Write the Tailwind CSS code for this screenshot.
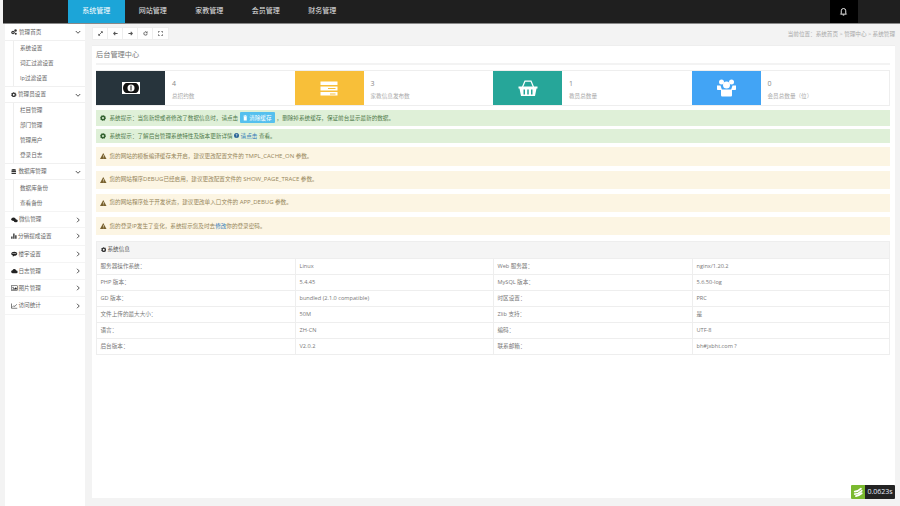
<!DOCTYPE html>
<html lang="zh-CN">
<head>
    <meta charset="UTF-8">
    <title>后台管理中心</title>
    <script src="https://cdn.jsdelivr.net/npm/@tailwindcss/browser@4"></script>
</head>
<body class="bg-[#f3f3f3] overflow-hidden font-['Open_Sans','Noto_Sans_CJK_SC',sans-serif] text-[5.6px] text-[#777]">
<div class="w-[900px] h-[506px] flex flex-col relative">
    <!-- Top bar -->
    <div class="h-[24px] ml-[3px] bg-[#1f1f1f] border-b border-[#888] flex text-[7px] text-[#e4e4e4] shrink-0">
        <div class="w-[65px]"></div>
        <div class="w-[56.5px] h-[23px] bg-[#1ca5d8] text-white flex items-center justify-center">系统管理</div>
        <div class="w-[56.5px] h-[23px] flex items-center justify-center">网站管理</div>
        <div class="w-[56.5px] h-[23px] flex items-center justify-center">家教管理</div>
        <div class="w-[56.5px] h-[23px] flex items-center justify-center">会员管理</div>
        <div class="w-[56.5px] h-[23px] flex items-center justify-center">财务管理</div>
        <div class="w-[28px] h-[23px] ml-[479px] bg-black flex items-center justify-center">
            <svg class="w-[9px] h-[9px]" viewBox="0 0 24 24" fill="none" stroke="#fff" stroke-width="2.4"><path d="M6 17V10a6 6 0 0 1 12 0v7l2 2H4z"/><path d="M10 21.5h4"/></svg>
        </div>
    </div>

    <div class="flex flex-1 min-h-0">
        <!-- Sidebar -->
        <div class="w-[80px] ml-[5px] bg-white shrink-0 text-[#666]">
            <div class="h-[17px] pl-[6px] pr-[4px] flex items-center border-b border-[#f0f0f0]">
                <svg class="w-[6px] h-[6px] mr-[2px]" viewBox="0 0 24 24" fill="#333"><circle cx="8" cy="14" r="7"/><circle cx="18" cy="6" r="5"/><circle cx="19" cy="19" r="4"/><circle cx="8" cy="14" r="2.5" fill="#fff"/></svg>
                <span>管理首页</span>
                <svg class="w-[6px] h-[6px] ml-auto" viewBox="0 0 24 24" fill="none" stroke="#555" stroke-width="4"><path d="M3 8l9 9 9-9"/></svg>
            </div>
            <div class="border-l border-[#eee] ml-[8px]">
                <div class="h-[15px] pl-[6px] flex items-center">系统设置</div>
                <div class="h-[15px] pl-[6px] flex items-center">词汇过滤设置</div>
                <div class="h-[15px] pl-[6px] flex items-center">Ip过滤设置</div>
            </div>
            <div class="h-[17px] pl-[6px] pr-[4px] flex items-center border-y border-[#f0f0f0]">
                <svg class="w-[5.5px] h-[5.5px] mr-[1.5px]" viewBox="0 0 24 24" fill="none" stroke="#333"><circle cx="12" cy="12" r="7" stroke-width="6"/><circle cx="12" cy="12" r="10.5" stroke-width="3" stroke-dasharray="4 4.25"/></svg>
                <span>管理员设置</span>
                <svg class="w-[6px] h-[6px] ml-auto" viewBox="0 0 24 24" fill="none" stroke="#555" stroke-width="4"><path d="M3 8l9 9 9-9"/></svg>
            </div>
            <div class="border-l border-[#eee] ml-[8px]">
                <div class="h-[15px] pl-[6px] flex items-center">栏目管理</div>
                <div class="h-[15px] pl-[6px] flex items-center">部门管理</div>
                <div class="h-[15px] pl-[6px] flex items-center">管理用户</div>
                <div class="h-[15px] pl-[6px] flex items-center">登录日志</div>
            </div>
            <div class="h-[17px] pl-[6px] pr-[4px] flex items-center border-y border-[#f0f0f0]">
                <svg class="w-[5.5px] h-[5.5px] mr-[2px]" viewBox="0 0 24 24" fill="#333"><ellipse cx="12" cy="4" rx="10" ry="4"/><path d="M2 7c2 3 18 3 20 0v5c-2 3-18 3-20 0zM2 15c2 3 18 3 20 0v5c-2 5-18 5-20 0z"/></svg>
                <span>数据库管理</span>
                <svg class="w-[6px] h-[6px] ml-auto" viewBox="0 0 24 24" fill="none" stroke="#555" stroke-width="4"><path d="M3 8l9 9 9-9"/></svg>
            </div>
            <div class="border-l border-[#eee] ml-[8px] py-[0.5px]">
                <div class="h-[15px] pl-[6px] flex items-center">数据库备份</div>
                <div class="h-[15px] pl-[6px] flex items-center">查看备份</div>
            </div>
            <div class="h-[17.3px] pl-[6px] pr-[4px] flex items-center border-y border-[#f4f4f4]">
                <svg class="w-[7px] h-[6px] mr-[1px]" viewBox="0 0 28 24" fill="#222"><ellipse cx="10" cy="9" rx="9" ry="7"/><ellipse cx="19" cy="15" rx="8" ry="6"/></svg>
                <span>微信管理</span>
                <svg class="w-[6px] h-[6px] ml-auto" viewBox="0 0 24 24" fill="none" stroke="#555" stroke-width="4"><path d="M8 3l9 9-9 9"/></svg>
            </div>
            <div class="h-[17.3px] pl-[6px] pr-[4px] flex items-center border-b border-[#f4f4f4]">
                <svg class="w-[6px] h-[6px] mr-[1px]" viewBox="0 0 24 24" fill="#222"><path d="M1 14h5v9H1zM9 2h5v21H9zM17 9h5v14h-5z"/></svg>
                <span>分销提成设置</span>
                <svg class="w-[6px] h-[6px] ml-auto" viewBox="0 0 24 24" fill="none" stroke="#555" stroke-width="4"><path d="M8 3l9 9-9 9"/></svg>
            </div>
            <div class="h-[17.3px] pl-[6px] pr-[4px] flex items-center border-b border-[#f4f4f4]">
                <svg class="w-[6.5px] h-[6px] mr-[1px]" viewBox="0 0 26 24" fill="#222"><path d="M13 3c7 0 12 3 12 8s-5 8-12 8l-6 4 1-5C3 17 1 14 1 11c0-5 5-8 12-8z"/><path d="M5 10h16v2H5z" fill="#fff"/></svg>
                <span>楼宇设置</span>
                <svg class="w-[6px] h-[6px] ml-auto" viewBox="0 0 24 24" fill="none" stroke="#555" stroke-width="4"><path d="M8 3l9 9-9 9"/></svg>
            </div>
            <div class="h-[17.3px] pl-[6px] pr-[4px] flex items-center border-b border-[#f4f4f4]">
                <svg class="w-[6.5px] h-[6px] mr-[1px]" viewBox="0 0 26 24" fill="#222"><path d="M7 21a6 6 0 0 1-1-12 8 8 0 0 1 15 1 5.500 5.500 0 0 1 0 11z"/></svg>
                <span>日志管理</span>
                <svg class="w-[6px] h-[6px] ml-auto" viewBox="0 0 24 24" fill="none" stroke="#555" stroke-width="4"><path d="M8 3l9 9-9 9"/></svg>
            </div>
            <div class="h-[17.3px] pl-[6px] pr-[4px] flex items-center border-b border-[#f4f4f4]">
                <svg class="w-[6.5px] h-[6px] mr-[1px]" viewBox="0 0 26 24" fill="#222"><path d="M0 2h26v20H0zm2 2v16h22V4z"/><circle cx="8" cy="9" r="2.5"/><path d="M4 18l6-5 3 2 6-6 4 4v5z"/></svg>
                <span>图片管理</span>
                <svg class="w-[6px] h-[6px] ml-auto" viewBox="0 0 24 24" fill="none" stroke="#555" stroke-width="4"><path d="M8 3l9 9-9 9"/></svg>
            </div>
            <div class="h-[17.3px] pl-[6px] pr-[4px] flex items-center border-b border-[#f4f4f4]">
                <svg class="w-[6.5px] h-[6px] mr-[1px]" viewBox="0 0 26 24" fill="none" stroke="#333" stroke-width="2.5"><path d="M2 2v19h23"/><path d="M5 17l6-6 4 3 8-9"/></svg>
                <span>访问统计</span>
                <svg class="w-[6px] h-[6px] ml-auto" viewBox="0 0 24 24" fill="none" stroke="#555" stroke-width="4"><path d="M8 3l9 9-9 9"/></svg>
            </div>
        </div>

        <!-- Main -->
        <div class="w-[810px] pl-[7px] flex flex-col">
            <div class="h-[20.5px] pt-[3px] flex items-start justify-between">
                <div class="flex bg-white border border-[#eee] h-[13px]">
                    <div class="w-[15px] flex items-center justify-center border-r border-[#eee]"><svg class="w-[5px] h-[5px]" viewBox="0 0 24 24" fill="none" stroke="#555" stroke-width="4"><path d="M4 20L20 4M14 3h7v7M3 14v7h7"/></svg></div>
                    <div class="w-[15px] flex items-center justify-center border-r border-[#eee]"><svg class="w-[5px] h-[5px]" viewBox="0 0 24 24" fill="none" stroke="#555" stroke-width="5"><path d="M22 12H4M11 4l-8 8 8 8"/></svg></div>
                    <div class="w-[15px] flex items-center justify-center border-r border-[#eee]"><svg class="w-[5px] h-[5px]" viewBox="0 0 24 24" fill="none" stroke="#555" stroke-width="5"><path d="M2 12h18M13 4l8 8-8 8"/></svg></div>
                    <div class="w-[15px] flex items-center justify-center border-r border-[#eee]"><svg class="w-[5px] h-[5px]" viewBox="0 0 24 24" fill="none" stroke="#555" stroke-width="4"><path d="M20 12a8 8 0 1 1-3-6.200M20 2v6h-6"/></svg></div>
                    <div class="w-[15px] flex items-center justify-center"><svg class="w-[5px] h-[5px]" viewBox="0 0 24 24" fill="none" stroke="#555" stroke-width="4"><path d="M2 8V2h6M16 2h6v6M22 16v6h-6M8 22H2v-6"/></svg></div>
                </div>
                <div class="text-[#aaa] pt-[3px]">当前位置：系统首页 &gt; 管理中心 &gt; 系统管理</div>
            </div>

            <div class="w-[803px] h-[453.5px] bg-white pl-[4px] pr-[5px] border-t border-[#eee]">
                <div class="h-[19.5px] flex items-center text-[7.2px] text-[#777] border-b-2 border-[#f3f3f3]">后台管理中心</div>
                <!-- Stats -->
                <div class="mt-[5px] h-[36px] border-y border-r border-[#eee] flex">
                    <div class="w-[198.5px] flex">
                        <div class="w-[69px] bg-[#27343c] flex items-center justify-center">
                            <svg class="w-[18px] h-[12px]" viewBox="0 0 36 24"><path d="M0 0h36v24H0z" fill="#fff"/><path d="M2 12c0-6 4-10 7-10h18c3 0 7 4 7 10s-4 10-7 10H9c-3 0-7-4-7-10z" fill="#111"/><circle cx="18" cy="12" r="7" fill="#fff"/><path d="M17 7h2v10h-2z" fill="#111"/></svg>
                        </div>
                        <div class="pl-[7px] pt-[8px]"><div class="text-[7px] leading-[9px] text-[#888]">4</div><div class="mt-[4px] text-[#aaa]">总招约数</div></div>
                    </div>
                    <div class="w-[198.5px] flex">
                        <div class="w-[69px] bg-[#f8bf39] flex items-center justify-center">
                            <svg class="w-[18px] h-[15px]" viewBox="0 0 36 30" fill="#fff"><path d="M1 1h34v7H1zM1 11h34v8H1zM1 22h34v7H1z"/><path d="M16 14h15v2H16zM20 25h11v2H20z" fill="#f8bf39"/></svg>
                        </div>
                        <div class="pl-[7px] pt-[8px]"><div class="text-[7px] leading-[9px] text-[#888]">3</div><div class="mt-[4px] text-[#aaa]">家教信息发布数</div></div>
                    </div>
                    <div class="w-[198.5px] flex">
                        <div class="w-[69px] bg-[#26a699] flex items-center justify-center">
                            <svg class="w-[20px] h-[18px]" viewBox="0 0 40 36"><path d="M9 16l5-12h12l5 12" fill="none" stroke="#fff" stroke-width="2.5"/><path d="M1 15h38v4h-2l-3 15H6L3 19H1z" fill="#fff"/><path d="M11 21h3v10h-3zM18.500 21h3v10h-3zM26 21h3v10h-3z" fill="#26a699"/></svg>
                        </div>
                        <div class="pl-[7px] pt-[8px]"><div class="text-[7px] leading-[9px] text-[#888]">1</div><div class="mt-[4px] text-[#aaa]">教员总数量</div></div>
                    </div>
                    <div class="flex-1 flex">
                        <div class="w-[69px] bg-[#42a4f5] flex items-center justify-center">
                            <svg class="w-[19px] h-[18px]" viewBox="0 0 38 36" fill="#fff"><circle cx="9" cy="6" r="5"/><circle cx="29" cy="6" r="5"/><circle cx="19" cy="12" r="7"/><path d="M0 13h7l3 9H3c-3 0-3-1-3-3zM38 13h-7l-3 9h7c3 0 3-1 3-3z"/><path d="M8 21h22v11c0 2-1 3-3 3H11c-2 0-3-1-3-3z"/></svg>
                        </div>
                        <div class="pl-[7px] pt-[8px]"><div class="text-[7px] leading-[9px] text-[#888]">0</div><div class="mt-[4px] text-[#aaa]">会员总数量（位）</div></div>
                    </div>
                </div>

                <!-- Alerts -->
                <div class="mt-[4px] h-[15.5px] bg-[#dff0d8] text-[#4f7a4b] flex items-center pl-[4px]">
                    <svg class="w-[6px] h-[6px] mr-[3.5px]" viewBox="0 0 24 24" fill="none" stroke="#33612f"><circle cx="12" cy="12" r="7" stroke-width="6"/><circle cx="12" cy="12" r="10.5" stroke-width="3" stroke-dasharray="4 4.25"/></svg>
                    <span>系统提示：当您新增或者修改了数据信息时，请点击</span>
                    <span class="mx-[1.5px] h-[11px] px-[3.5px] bg-[#55c0ee] text-white rounded-[1px] flex items-center">
                        <svg class="w-[4.5px] h-[5.5px] mr-[1.5px]" viewBox="0 0 18 22" fill="#fff"><path d="M1 3h16v2H1zM6 0h6v2H6zM3 6h12v16H3z"/></svg>
                        清除缓存
                    </span>
                    <span>，删除掉系统缓存，保证前台显示最新的数据。</span>
                </div>
                <div class="mt-[3.5px] h-[13.5px] bg-[#dff0d8] text-[#4f7a4b] flex items-center pl-[4px]">
                    <svg class="w-[6px] h-[6px] mr-[3.5px]" viewBox="0 0 24 24" fill="none" stroke="#33612f"><circle cx="12" cy="12" r="7" stroke-width="6"/><circle cx="12" cy="12" r="10.5" stroke-width="3" stroke-dasharray="4 4.25"/></svg>
                    <span>系统提示：了解后台管理系统特性及版本更新详情</span>
                    <svg class="w-[5px] h-[5px] mx-[1.5px]" viewBox="0 0 24 24"><circle cx="12" cy="12" r="12" fill="#2a6496"/><path d="M9 9a3 3 0 1 1 4 3l-1 1v2M12 18v2" stroke="#fff" stroke-width="3" fill="none"/></svg>
                    <span class="text-[#337ab7]">请点击</span>
                    <span class="ml-[1.5px]">查看。</span>
                </div>
                <div class="mt-[4.5px] h-[18.5px] bg-[#fcf5e3] text-[#96855a] flex items-center pl-[4px]">
                    <svg class="w-[6.5px] h-[6px] mr-[3px]" viewBox="0 0 26 24"><path d="M13 0l13 24H0z" fill="#7a6330"/><path d="M12 8h2v8h-2zM12 18h2v3h-2z" fill="#fcf5e3"/></svg>
                    <span>您的网站的模板编译缓存未开启，建议更改配置文件的 <span class="text-[6px]">TMPL_CACHE_ON</span> 参数。</span>
                </div>
                <div class="mt-[5px] h-[18px] bg-[#fcf5e3] text-[#96855a] flex items-center pl-[4px]">
                    <svg class="w-[6.5px] h-[6px] mr-[3px]" viewBox="0 0 26 24"><path d="M13 0l13 24H0z" fill="#7a6330"/><path d="M12 8h2v8h-2zM12 18h2v3h-2z" fill="#fcf5e3"/></svg>
                    <span>您的网站程序<span class="text-[6px]">DEBUG</span>已经启用，建议更改配置文件的 <span class="text-[6px]">SHOW_PAGE_TRACE</span> 参数。</span>
                </div>
                <div class="mt-[5px] h-[18px] bg-[#fcf5e3] text-[#96855a] flex items-center pl-[4px]">
                    <svg class="w-[6.5px] h-[6px] mr-[3px]" viewBox="0 0 26 24"><path d="M13 0l13 24H0z" fill="#7a6330"/><path d="M12 8h2v8h-2zM12 18h2v3h-2z" fill="#fcf5e3"/></svg>
                    <span>您的网站程序处于开发状态，建议更改单入口文件的 <span class="text-[6px]">APP_DEBUG</span> 参数。</span>
                </div>
                <div class="mt-[5.5px] h-[18px] bg-[#fcf5e3] text-[#96855a] flex items-center pl-[4px]">
                    <svg class="w-[6.5px] h-[6px] mr-[3px]" viewBox="0 0 26 24"><path d="M13 0l13 24H0z" fill="#7a6330"/><path d="M12 8h2v8h-2zM12 18h2v3h-2z" fill="#fcf5e3"/></svg>
                    <span>您的登录IP发生了变化，系统提示您及时去<span class="text-[#337ab7]">修改</span>你的登录密码。</span>
                </div>

                <!-- System info table -->
                <div class="mt-[5.5px] border border-[#eee] text-[#777]">
                    <div class="h-[16px] bg-[#f5f5f5] flex items-center pl-[3.5px] text-[#555]">
                        <svg class="w-[5.5px] h-[5.5px] mr-[1.5px]" viewBox="0 0 24 24" fill="none" stroke="#333"><circle cx="12" cy="12" r="7" stroke-width="6"/><circle cx="12" cy="12" r="10.5" stroke-width="3" stroke-dasharray="4 4.25"/></svg>
                        <span>系统信息</span>
                    </div>
                    <div class="grid grid-cols-[198px_198px_199px_1fr]">
                        <div class="h-[16px] flex items-center pl-[3.5px] border-t border-[#eee]">服务器操作系统：</div>
                        <div class="h-[16px] flex items-center pl-[3.5px] border-t border-l border-[#eee]">Linux</div>
                        <div class="h-[16px] flex items-center pl-[3.5px] border-t border-l border-[#eee]">Web 服务器：</div>
                        <div class="h-[16px] flex items-center pl-[3.5px] border-t border-l border-[#eee]">nginx/1.20.2</div>
                        <div class="h-[16px] flex items-center pl-[3.5px] border-t border-[#eee]">PHP 版本：</div>
                        <div class="h-[16px] flex items-center pl-[3.5px] border-t border-l border-[#eee]">5.4.45</div>
                        <div class="h-[16px] flex items-center pl-[3.5px] border-t border-l border-[#eee]">MySQL 版本：</div>
                        <div class="h-[16px] flex items-center pl-[3.5px] border-t border-l border-[#eee]">5.6.50-log</div>
                        <div class="h-[16px] flex items-center pl-[3.5px] border-t border-[#eee]">GD 版本：</div>
                        <div class="h-[16px] flex items-center pl-[3.5px] border-t border-l border-[#eee]">bundled (2.1.0 compatible)</div>
                        <div class="h-[16px] flex items-center pl-[3.5px] border-t border-l border-[#eee]">时区设置：</div>
                        <div class="h-[16px] flex items-center pl-[3.5px] border-t border-l border-[#eee]">PRC</div>
                        <div class="h-[16px] flex items-center pl-[3.5px] border-t border-[#eee]">文件上传的最大大小：</div>
                        <div class="h-[16px] flex items-center pl-[3.5px] border-t border-l border-[#eee]">50M</div>
                        <div class="h-[16px] flex items-center pl-[3.5px] border-t border-l border-[#eee]">Zlib 支持：</div>
                        <div class="h-[16px] flex items-center pl-[3.5px] border-t border-l border-[#eee]">是</div>
                        <div class="h-[16px] flex items-center pl-[3.5px] border-t border-[#eee]">语言：</div>
                        <div class="h-[16px] flex items-center pl-[3.5px] border-t border-l border-[#eee]">ZH-CN</div>
                        <div class="h-[16px] flex items-center pl-[3.5px] border-t border-l border-[#eee]">编码：</div>
                        <div class="h-[16px] flex items-center pl-[3.5px] border-t border-l border-[#eee]">UTF-8</div>
                        <div class="h-[16px] flex items-center pl-[3.5px] border-t border-[#eee]">后台版本：</div>
                        <div class="h-[16px] flex items-center pl-[3.5px] border-t border-l border-[#eee]">V2.0.2</div>
                        <div class="h-[16px] flex items-center pl-[3.5px] border-t border-l border-[#eee]">联系邮箱：</div>
                        <div class="h-[16px] flex items-center pl-[3.5px] border-t border-l border-[#eee]">bh#jxbht.com ?</div>
                    </div>
                </div>
            </div>
        </div>
    </div>

    <!-- Page trace badge -->
    <div class="absolute right-[5px] bottom-[7px] flex h-[14px]">
        <div class="w-[14px] bg-[#7ab92f] rounded-l-[1px] flex items-center justify-center">
            <svg class="w-[10px] h-[10px]" viewBox="0 0 24 24" fill="none" stroke="#fff" stroke-width="4" stroke-linecap="round"><path d="M4 11c5 0 10-2 15-7M4 17c6 0 11-2 17-8M7 22c5-1 9-3 14-7"/></svg>
        </div>
        <div class="w-[30px] bg-[#232323] rounded-r-[1px] text-[#e8eefc] text-[7px] flex items-center justify-center">0.0623s</div>
    </div>
</div>
</body>
</html>
